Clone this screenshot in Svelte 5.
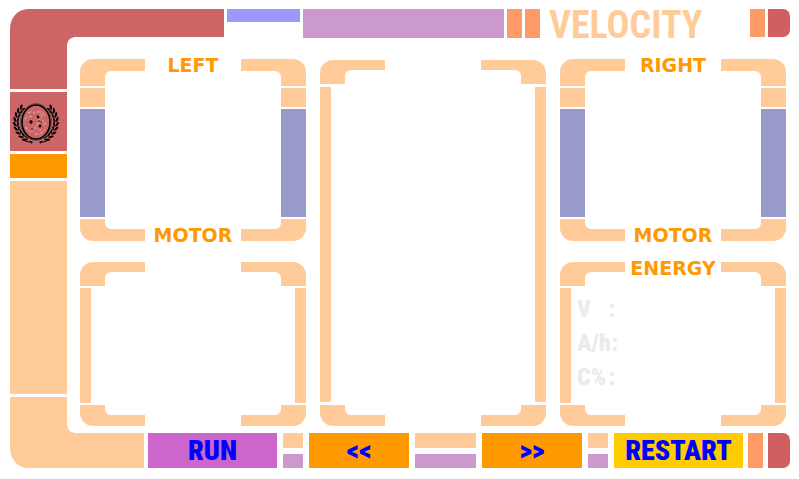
<script>
  const motors = [
    { title: 'LEFT', foot: 'MOTOR', column: 1 },
    { title: 'RIGHT', foot: 'MOTOR', column: 3 }
  ];
  const gauges = [
    { title: '', column: 1, readings: [] },
    { title: 'ENERGY', column: 3, readings: ['V', 'A/h', 'C%'] }
  ];

  // Laurel leaves along one side of the emblem, listed from the stem up.
  const leaves = Array.from({ length: 9 }, (_, i) => {
    const deg = 120 + i * 13;
    const a = (deg * Math.PI) / 180;
    return { x: 19.4 * Math.cos(a), y: 19 * Math.sin(a), turn: deg + 90 };
  });

  const stars = [
    [-5, 0, 1.7], [2, -5, 1.4], [4, 4, 1.4], [3, -1, 0.7], [-4, 7, 0.6], [5, 0, 0.6]
  ];
</script>

{#snippet elbow(h, arm, side)}
  <svg class="elbow {side}" width="65" height={h} viewBox="0 0 65 {h}" aria-hidden="true">
    <path d="M0 {h}V13A13 13 0 0 1 13 0H65V{arm}H31A6 6 0 0 0 25 {arm + 6}V{h}Z" />
  </svg>
{/snippet}

<div class="console">
  <aside class="rail">
    <div class="block red top"></div>
    <div class="block red emblem">
      <svg width="48" height="44" viewBox="-24 -22 48 44" role="img" aria-label="Emblem">
        {#each [1, -1] as flip}
          <g transform="scale({flip} 1)">
            <path d="M-4 20.5Q-11 20 -14 17" fill="none" stroke="#111" stroke-width="1" />
            <path d="M-7 19.5Q-2 19 -4.5 21.5" fill="none" stroke="#111" />
            {#each leaves as l}
              <g transform="translate({l.x} {l.y}) rotate({l.turn})">
                <path d="M-2 0Q-1 -3.8 3.4 -3.4Q3 -.6 -2 0Z" />
                <path d="M-2 .2Q-1 2.8 3 2.2Q2 -.2 -2 .2Z" />
              </g>
            {/each}
          </g>
        {/each}
        <ellipse rx="15.5" ry="18.4" fill="#c66" stroke="#555" />
        <ellipse rx="14" ry="17" fill="none" stroke="#000" stroke-width="1.6" />
        <g fill="none" stroke="#e0b4b4" stroke-width="1.1" stroke-dasharray="2 1.2 .8 1.6">
          <path d="M-8 -9Q-3 -12 -1 -8M1 -10Q7 -11 9 -5M-11 -3Q-8 -7 -4 -5M-10 5Q-8 11 -3 9M0 -4L5 -7L7 -1L1 2L-1 6L5 8M-1 12Q6 13 9 7M3 -3L3 5M10 1L6 4" />
        </g>
        {#each stars as [x, y, r]}
          <path d="M{x - r} {y}H{x + r}M{x} {y - r}V{y + r}" stroke="#000" stroke-width={r} />
        {/each}
      </svg>
    </div>
    <div class="block orange slim"></div>
    <div class="block peach tall"></div>
    <div class="block peach bottom"></div>
  </aside>

  <div class="main">
    <header class="bar head">
      <div class="red lead"></div>
      <div class="blue"></div>
      <div class="lilac"></div>
      <div class="coral chip"></div>
      <div class="coral chip"></div>
      <h1>VELOCITY</h1>
      <div class="coral chip"></div>
      <div class="crimson cap"></div>
    </header>

    <main class="panels">
      {#each motors as m}
        <section class="panel motor" style:grid-column={m.column}>
          <div class="edge">
            {@render elbow(27, 12, '')}
            <h2>{m.title}</h2>
            {@render elbow(27, 12, 'right')}
          </div>
          <div class="sides">
            <div class="side"><i class="peach"></i><i class="violet"></i></div>
            <div class="side"><i class="peach"></i><i class="violet"></i></div>
          </div>
          <div class="edge low">
            {@render elbow(22, 12, 'down')}
            <h2>{m.foot}</h2>
            {@render elbow(22, 12, 'down right')}
          </div>
        </section>
      {/each}

      <section class="panel view">
        <div class="edge">
          {@render elbow(24, 10, '')}
          {@render elbow(24, 10, 'right')}
        </div>
        <div class="sides thin">
          <i class="peach"></i><i class="peach"></i>
        </div>
        <div class="edge low">
          {@render elbow(21, 11, 'down')}
          {@render elbow(21, 11, 'down right')}
        </div>
      </section>

      {#each gauges as g}
        <section class="panel gauge" style:grid-column={g.column}>
          <div class="edge">
            {@render elbow(24, 10, '')}
            {#if g.title}<h2>{g.title}</h2>{/if}
            {@render elbow(24, 10, 'right')}
          </div>
          <div class="sides thin">
            <i class="peach"></i>
            {#if g.readings.length}
              <ul>
                {#each g.readings as r}
                  <li><span>{r}</span><span>:</span></li>
                {/each}
              </ul>
            {/if}
            <i class="peach"></i>
          </div>
          <div class="edge low">
            {@render elbow(21, 11, 'down')}
            {@render elbow(21, 11, 'down right')}
          </div>
        </section>
      {/each}
    </main>

    <footer class="bar foot">
      <div class="peach lead"></div>
      <button class="run">RUN</button>
      <div class="pair"><i class="peach"></i><i class="lilac"></i></div>
      <button class="step">&lt;&lt;</button>
      <div class="pair wide"><i class="peach"></i><i class="lilac"></i></div>
      <button class="step">&gt;&gt;</button>
      <div class="pair"><i class="peach"></i><i class="lilac"></i></div>
      <button class="restart">RESTART</button>
      <div class="coral chip"></div>
      <div class="crimson cap"></div>
    </footer>
  </div>
</div>

<style>
  :global(body) {
    margin: 0;
    background: #fff;
  }
  .console {
    box-sizing: border-box;
    min-height: 100vh;
    display: flex;
    padding: 9px 9px 11px 10px;
    font-family: 'Roboto Condensed', Roboto, 'Liberation Sans', sans-serif;
    font-weight: 900;
  }
  .red { background: #c66; }
  .crimson { background: #d25f5f; }
  .orange { background: #f90; }
  .peach { background: #fc9; }
  .coral { background: #f96; }
  .lilac { background: #c9c; }
  .blue { background: #99f; }
  .violet { background: #99c; }

  .rail {
    flex: none;
    width: 57px;
    display: flex;
    flex-direction: column;
    gap: 3px;
  }
  .top { height: 80px; border-top-left-radius: 18px 20px; }
  .emblem {
    box-sizing: border-box;
    height: 59px;
    padding-right: 5px;
    display: flex;
    align-items: center;
    justify-content: center;
  }
  .emblem svg { flex: none; }
  .slim { height: 24px; }
  .tall { flex: 1; }
  .bottom { height: 71px; border-bottom-left-radius: 18px 20px; }

  .main {
    flex: 1;
    min-width: 0;
    display: flex;
    flex-direction: column;
  }
  .bar { display: flex; }
  .lead { position: relative; }
  .lead::after {
    content: '';
    position: absolute;
    left: 0;
    width: 7px;
    height: 7px;
  }
  .head { height: 29px; gap: 3px; }
  .head .lead { flex: 157 1 0; height: 28px; }
  .head .lead::after {
    top: 100%;
    background: radial-gradient(circle at 100% 100%, transparent 6px, #c66 7px);
  }
  .head .blue { flex: 73 1 0; height: 13px; }
  .head .lilac { flex: 201 1 0; }
  .head h1 {
    flex: 204 1 0;
    min-width: 0;
    margin: 0;
    text-indent: 6px;
    font-size: 38px;
    line-height: 32px;
    color: #fc9;
  }
  .chip { flex: none; width: 15px; }
  .cap { flex: none; width: 22px; border-radius: 0 7px 7px 0; }
  .head .cap, .head h1 + .chip { height: 28px; }

  .panels {
    flex: 1;
    display: grid;
    grid-template-columns: repeat(3, 1fr);
    grid-template-rows: 182fr 164fr;
    gap: 21px 14px;
    padding: 21px 4px 7px 13px;
  }
  .panel {
    display: flex;
    flex-direction: column;
    gap: 2px;
  }
  .motor { grid-row: 1; }
  .gauge { grid-row: 2; }
  .view { grid-area: 1 / 2 / 3 / 3; padding-top: 1px; gap: 3px; }
  .edge {
    display: flex;
    justify-content: space-between;
    align-items: flex-start;
  }
  .low { align-items: flex-end; }
  .elbow { display: block; flex: none; fill: #fc9; }
  .right { transform: scaleX(-1); }
  .down { transform: scaleY(-1); }
  .down.right { transform: scale(-1); }
  h2 {
    flex: 1;
    min-width: 0;
    margin: 0;
    display: flex;
    justify-content: center;
    font: 900 19px/12px 'DejaVu Sans', sans-serif;
    color: #f90;
  }
  .sides {
    flex: 1;
    display: flex;
    justify-content: space-between;
  }
  .side {
    width: 25px;
    display: flex;
    flex-direction: column;
    gap: 2px;
  }
  .side .peach { height: 19px; }
  .side .violet { flex: 1; }
  .thin .peach { width: 11px; }
  ul {
    flex: 1;
    list-style: none;
    margin: 0;
    padding: 4px 6px;
    font-size: 24px;
    line-height: 34px;
    color: #ebebeb;
  }
  li {
    width: 38px;
    display: flex;
    justify-content: space-between;
  }

  .foot { height: 35px; gap: 6px; }
  .foot .lead { flex: 77 1 0; margin-right: -2px; }
  .foot .chip { margin: 0 -1px; }
  .foot .lead::after {
    bottom: 100%;
    background: radial-gradient(circle at 100% 0, transparent 6px, #fc9 7px);
  }
  button {
    flex: 129 1 0;
    min-width: 0;
    border: 0;
    padding: 0;
    font: inherit;
    font-size: 28px;
    line-height: 35px;
    color: #00f;
    cursor: pointer;
  }
  .run { background: #c6c; }
  .step { flex-grow: 100; background: #f90; }
  .restart { background: #fc0; }
  .pair {
    flex: 20 1 0;
    display: flex;
    flex-direction: column;
    gap: 6px;
  }
  .wide { flex-grow: 61; }
  .pair i { flex: 1; }
</style>
